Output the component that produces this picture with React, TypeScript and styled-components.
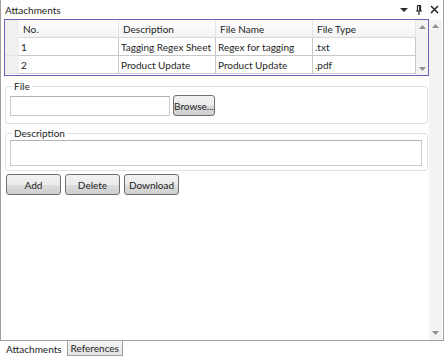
import React from 'react'
import styled, { createGlobalStyle } from 'styled-components'

const GlobalStyle = createGlobalStyle`
  html, body { margin: 0; padding: 0; background: #ffffff; }
  body { font-family: Lato, "Open Sans", sans-serif; font-size: 10px; color: #1e1e1e; }
  * { box-sizing: border-box; }
`

const Window = styled.div`
  width: 446px;
  height: 358px;
  display: flex;
  flex-direction: column;
  background: #ffffff;
`

const Panel = styled.div`
  width: 444px;
  height: 341px;
  border-left: 1px solid #a0a0a0;
  border-right: 1px solid #a0a0a0;
  border-bottom: 1px solid #a0a0a0;
  display: flex;
  flex-direction: column;
`

const TitleBar = styled.div`
  height: 19px;
  display: flex;
  align-items: center;
  padding: 0 4px 0 4px;
  justify-content: space-between;
`

const Title = styled.span`
  font-size: 10px;
  color: #1e1e1e;
`

const TitleIcons = styled.div`
  display: flex;
  align-items: center;
  gap: 7px;
`

const Body = styled.div`
  flex: 1;
  display: flex;
  min-height: 0;
`

const Content = styled.div`
  flex: 1;
  padding: 0 0 0 3px;
  display: flex;
  flex-direction: column;
`

const OuterScroll = styled.div`
  width: 13px;
  margin: 1px 1px 0 0;
  background: #f3f3f3;
  display: flex;
  flex-direction: column;
  justify-content: space-between;
  align-items: center;
  padding: 4px 0 5px;
`

const Grid = styled.div`
  width: 425px;
  height: 57px;
  border: 1px solid #6565b5;
  display: flex;
`

const GridBody = styled.div`
  flex: 1;
  display: flex;
  flex-direction: column;
`

const GridRow = styled.div<{ header?: boolean }>`
  display: flex;
  height: 18px;
  background: ${({ header }) => (header ? 'linear-gradient(#ffffff, #f2f2f2)' : '#ffffff')};
`

const RowHead = styled.div<{ header?: boolean }>`
  width: 14px;
  background: #f0f0f0;
  border-bottom: 1px solid ${({ header }) => (header ? '#f0f0f0' : '#e2e2e2')};
`

const Cell = styled.div<{ w: number; header?: boolean }>`
  width: ${({ w }) => w}px;
  padding-left: ${({ header }) => (header ? 4 : 2)}px;
  display: flex;
  align-items: center;
  white-space: nowrap;
  overflow: hidden;
  border-right: 1px solid ${({ header }) => (header ? '#e4e4e4' : '#c8c8c8')};
  border-bottom: 1px solid ${({ header }) => (header ? '#d8d8d8' : '#c8c8c8')};
`

const GridScroll = styled.div`
  width: 12px;
  background: #f3f3f3;
  display: flex;
  flex-direction: column;
  justify-content: space-between;
  align-items: center;
  padding: 5px 0 4px;
`

const GroupBox = styled.fieldset<{ top: number }>`
  margin: ${({ top }) => top}px 0 0 1px;
  width: 423px;
  height: 44px;
  border: 1px solid #dbe2e8;
  border-radius: 3px;
  padding: 0 4px;
  display: flex;
  align-items: flex-start;
  gap: 3px;
`

const Legend = styled.legend`
  padding: 0 2px;
  margin-left: 2px;
  font-size: 10px;
  line-height: 12px;
  color: #1e1e1e;
`

const TextInput = styled.div<{ w: number; h: number; top: number }>`
  width: ${({ w }) => w}px;
  height: ${({ h }) => h}px;
  border: 1px solid #cbcbcb;
  border-top-color: #b4b4b4;
  background: #ffffff;
  margin-top: ${({ top }) => top}px;
`

const Button = styled.button<{ w: number }>`
  width: ${({ w }) => w}px;
  height: 21px;
  border: 1px solid #707070;
  border-radius: 3px;
  background: linear-gradient(#f2f2f2 0%, #ebebeb 50%, #dddddd 51%, #cfcfcf 100%);
  font-family: inherit;
  font-size: 10px;
  color: #1e1e1e;
  padding: 0;
  white-space: nowrap;
`

const BrowseButton = styled(Button)`
  margin-top: 3px;
`

const ButtonRow = styled.div`
  display: flex;
  gap: 4px;
  margin: 3px 0 0 2px;
`

const TabStrip = styled.div`
  height: 17px;
  display: flex;
  align-items: flex-start;
  padding-left: 1px;
`

const Tab = styled.div<{ active?: boolean }>`
  height: ${({ active }) => (active ? 17 : 15)}px;
  padding: 0 ${({ active }) => (active ? 4 : 3)}px;
  display: flex;
  align-items: center;
  background: ${({ active }) => (active ? '#ffffff' : 'linear-gradient(#f4f4f4, #e3e3e3)')};
  border: 1px solid ${({ active }) => (active ? 'transparent' : '#a0a0a0')};
  border-top: none;
  font-size: 10px;
  color: #1e1e1e;
`

const Arrow = ({ up }: { up?: boolean }) => (
  <svg width="7" height="4" viewBox="0 0 7 4">
    <path d={up ? 'M0 4 L3.5 0 L7 4 Z' : 'M0 0 L3.5 4 L7 0 Z'} fill="#909090" />
  </svg>
)

const columns = [
  { title: 'No.', w: 100 },
  { title: 'Description', w: 97 },
  { title: 'File Name', w: 97 },
  { title: 'File Type', w: 103 },
]

const rows = [
  ['1', 'Tagging Regex Sheet', 'Regex for tagging', '.txt'],
  ['2', 'Product Update', 'Product Update', '.pdf'],
]

export default function App() {
  return (
    <Window>
      <GlobalStyle />
      <Panel>
        <TitleBar>
          <Title>Attachments</Title>
          <TitleIcons>
            <svg width="8" height="6" viewBox="0 0 8 6">
              <path d="M0 1 L8 1 L4 5 Z" fill="#2a2a2a" />
            </svg>
            <svg width="8" height="10" viewBox="0 0 8 10">
              <path d="M2 0.5 H6 M2.5 0.5 V6 M5.5 0.5 V6 M1 6 H7 M4 6 V10" stroke="#2a2a2a" strokeWidth="1.2" fill="none" />
              <rect x="4" y="1" width="1.5" height="5" fill="#2a2a2a" />
            </svg>
            <svg width="9" height="9" viewBox="0 0 9 9">
              <path d="M1 1 L8 8 M8 1 L1 8" stroke="#2a2a2a" strokeWidth="1.6" />
            </svg>
          </TitleIcons>
        </TitleBar>
        <Body>
          <Content>
            <Grid>
              <GridBody>
                <GridRow header>
                  <RowHead header />
                  {columns.map((c) => (
                    <Cell key={c.title} w={c.w} header>
                      {c.title}
                    </Cell>
                  ))}
                </GridRow>
                {rows.map((r) => (
                  <GridRow key={r[0]}>
                    <RowHead />
                    {r.map((v, i) => (
                      <Cell key={i} w={columns[i].w}>
                        {v}
                      </Cell>
                    ))}
                  </GridRow>
                ))}
              </GridBody>
              <GridScroll>
                <Arrow up />
                <Arrow />
              </GridScroll>
            </Grid>
            <GroupBox top={4}>
              <Legend>File</Legend>
              <TextInput w={160} h={20} top={4} />
              <BrowseButton w={42}>Browse...</BrowseButton>
            </GroupBox>
            <GroupBox top={3}>
              <Legend>Description</Legend>
              <TextInput w={412} h={26} top={1} />
            </GroupBox>
            <ButtonRow>
              <Button w={55}>Add</Button>
              <Button w={55}>Delete</Button>
              <Button w={55}>Download</Button>
            </ButtonRow>
          </Content>
          <OuterScroll>
            <Arrow up />
            <Arrow />
          </OuterScroll>
        </Body>
      </Panel>
      <TabStrip>
        <Tab active>Attachments</Tab>
        <Tab>References</Tab>
      </TabStrip>
    </Window>
  )
}
